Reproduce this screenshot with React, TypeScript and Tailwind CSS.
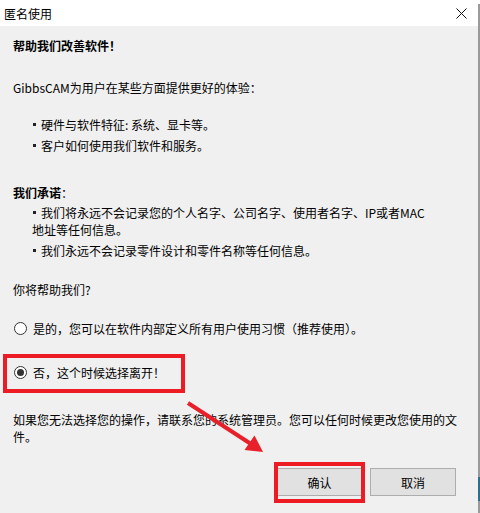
import React from "react";

const font = {
  fontFamily: '"Noto Sans CJK SC", "Noto Sans", sans-serif',
};

const Radio = ({ checked }: { checked?: boolean }) => (
  <span className="flex h-[13px] w-[13px] shrink-0 items-center justify-center rounded-full border border-[#333333] bg-white">
    {checked && <span className="h-[7px] w-[7px] rounded-full bg-[#333333]" />}
  </span>
);

const Bullet = ({ children }: { children: React.ReactNode }) => (
  <p className="whitespace-nowrap pl-[32px] leading-[17px]">
    <span className="inline-flex h-[17px] w-[9px] items-center pl-[1px] align-top">
      <span className="h-[3px] w-[3px] bg-[#222222]" />
    </span>
    {children}
  </p>
);

export default function App() {
  return (
    <div
      className="relative flex h-[513px] w-[480px] overflow-hidden bg-[#f0f0f0] text-[12px] text-black"
      style={font}
    >
      <div className="flex w-[478px] flex-col">
        {/* title bar */}
        <div className="flex h-[26px] items-center justify-between bg-white pl-[4px] pr-[11px]">
          <span className="leading-[17px]">匿名使用</span>
          <svg width="11" height="11" viewBox="0 0 11 11">
            <path d="M0.5 0.5 L10.5 10.5 M10.5 0.5 L0.5 10.5" stroke="#111" strokeWidth="1" />
          </svg>
        </div>

        <div className="flex flex-col pl-[13px]">
          <h1 className="mt-[11px] font-bold leading-[17px]">帮助我们改善软件！</h1>
          <p className="mt-[25px] leading-[17px]">GibbsCAM为用户在某些方面提供更好的体验：</p>
        </div>

        <div className="mt-[20px] flex flex-col gap-[4px]">
          <Bullet>硬件与软件特征: 系统、显卡等。</Bullet>
          <Bullet>客户如何使用我们软件和服务。</Bullet>
        </div>

        <h2 className="mt-[30px] pl-[13px] leading-[17px]">
          <span className="font-bold">我们承诺</span>：
        </h2>

        <div className="mt-[3px] flex flex-col gap-[4px]">
          <Bullet>
            我们将永远不会记录您的个人名字、公司名字、使用者名字、IP或者MAC
            <br />
            地址等任何信息。
          </Bullet>
          <Bullet>我们永远不会记录零件设计和零件名称等任何信息。</Bullet>
        </div>

        <p className="mt-[22px] pl-[13px] leading-[17px]">你将帮助我们?</p>

        <label className="mt-[22px] flex h-[17px] items-center gap-[6px] pl-[14px]">
          <Radio />
          <span className="leading-[17px]">是的，您可以在软件内部定义所有用户使用习惯（推荐使用）。</span>
        </label>

        <label className="relative mt-[27px] flex h-[17px] items-center gap-[6px] pl-[14px]">
          <Radio checked />
          <span className="leading-[17px]">否，这个时候选择离开！</span>
          <span className="absolute left-[3px] top-[-10px] h-[39px] w-[182px] border-[4px] border-[#ed1c24]" />
        </label>

        <p className="mt-[30px] whitespace-nowrap pl-[13px] leading-[17px]">
          如果您无法选择您的操作，请联系您的系统管理员。您可以任何时候更改您使用的文
          <br />
          件。
        </p>

        <div className="mt-[23px] flex justify-end gap-[8px] pr-[22px]">
          <button className="relative h-[28px] w-[85px] border border-[#adadad] bg-[#e1e1e1] leading-[17px]">
            确认
            <span className="absolute left-[-4px] top-[-7px] h-[41px] w-[91px] border-[4px] border-[#ed1c24]" />
          </button>
          <button className="h-[28px] w-[86px] border border-[#adadad] bg-[#e1e1e1] leading-[17px]">
            取消
          </button>
        </div>
      </div>

      {/* window edge */}
      <div className="flex w-[2px] flex-col">
        <div className="h-[4px] bg-white" />
        <div className="flex-1 bg-[#9a9a9a]" />
        <div className="h-[24px] bg-[#2b6f8f]" />
        <div className="h-[12px] bg-[#9a9a9a]" />
      </div>

      {/* annotation arrow */}
      <svg className="pointer-events-none absolute left-0 top-0" width="480" height="513">
        <line x1="188" y1="403" x2="251" y2="444" stroke="#e8202a" strokeWidth="4" />
        <polygon points="263,452 244.5,450 254.5,435.5" fill="#e8202a" />
      </svg>
    </div>
  );
}
